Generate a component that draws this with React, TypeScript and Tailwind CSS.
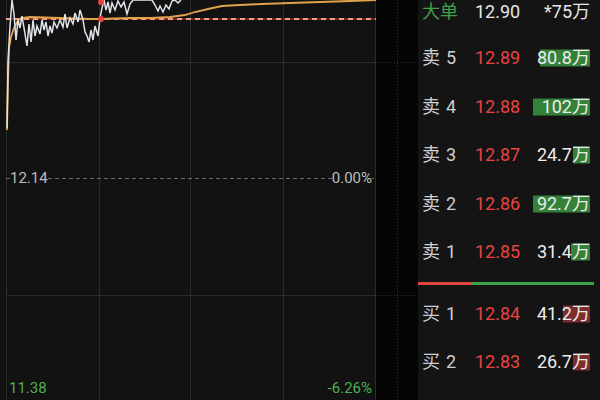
import React from 'react'

const pricePts =
  '7,128 8,62 10,26 12,0 14,14 16,40 18,20 20,28 22,16 25,34 27,46 29,24 31,42 33,20 35,36 37,26 40,34 42,20 44,30 46,22 48,36 50,26 52,33 54,22 57,28 60,20 63,27 65,14 67,28 70,18 73,24 75,13 78,22 80,10 83,20 85,32 87,36 89,42 91,30 93,40 95,26 98,36 100,18 102,8 104,0 106,10 108,2 110,13 112,3 115,10 118,1 121,7 124,2 127,14 130,4 133,0 152,0 155,5 158,11 160,6 163,12 166,5 169,9 172,1 175,0 178,3 181,0'

const avgPts =
  '7,130 8,82 9,48 11,37 14,28 17,22 21,18 30,17 60,18 90,19 100,19 130,18 150,18 170,17 185,15 195,12 208,9 222,6 240,5 262,4 290,3 320,2 350,1 376,0'

type Row = {
  label: string
  price: string
  vol: string
  bar: number
  tone: 'g' | 'r'
}

const asks: Row[] = [
  { label: '卖5', price: '12.89', vol: '80.8万', bar: 50, tone: 'g' },
  { label: '卖4', price: '12.88', vol: '102万', bar: 57, tone: 'g' },
  { label: '卖3', price: '12.87', vol: '24.7万', bar: 17, tone: 'g' },
  { label: '卖2', price: '12.86', vol: '92.7万', bar: 57, tone: 'g' },
  { label: '卖1', price: '12.85', vol: '31.4万', bar: 19, tone: 'g' },
]

const bids: Row[] = [
  { label: '买1', price: '12.84', vol: '41.2万', bar: 27, tone: 'r' },
  { label: '买2', price: '12.83', vol: '26.7万', bar: 17, tone: 'r' },
  { label: '买3', price: '12.82', vol: '38.1万', bar: 33, tone: 'r' },
]

const QuoteRow = ({ row }: { row: Row }) => (
  <div className="flex h-[48.5px] shrink-0 items-center">
    <div className="w-[57px] pl-[4px] text-[#cfcfcf]">
      {row.label[0]}
      <span className="ml-[6px]">{row.label.slice(1)}</span>
    </div>
    <div className="w-[56px] text-[#e8433f]">{row.price}</div>
    <div className="flex flex-1 justify-end pr-[10px]">
      <div className="relative">
        <span
          className={
            row.tone === 'g'
              ? 'absolute right-0 top-1/2 h-[17px] -translate-y-1/2 bg-[#34823a]'
              : 'absolute right-0 top-1/2 h-[17px] -translate-y-1/2 bg-[#7c2c2c]'
          }
          style={{ width: row.bar }}
        />
        <span className="relative text-[#ececec]">{row.vol}</span>
      </div>
    </div>
  </div>
)

const Chart = () => (
  <div className="relative h-full w-[376px] shrink-0 bg-[#121212]">
    <svg className="absolute inset-0" width="376" height="400" viewBox="0 0 376 400">
      <g stroke="#2b2b2b" strokeWidth="1">
        <line x1="6.5" y1="0" x2="6.5" y2="400" />
        <line x1="99.5" y1="0" x2="99.5" y2="400" />
        <line x1="190.5" y1="0" x2="190.5" y2="400" />
        <line x1="283.5" y1="0" x2="283.5" y2="400" />
        <line x1="375.5" y1="0" x2="375.5" y2="400" />
        <line x1="6" y1="62.5" x2="376" y2="62.5" />
        <line x1="6" y1="295.5" x2="376" y2="295.5" />
      </g>
      <line x1="6" y1="178.5" x2="376" y2="178.5" stroke="#6a6a6a" strokeDasharray="4 3" />
      <line x1="6" y1="19" x2="376" y2="19" stroke="#7a2418" strokeWidth="2" />
      <line x1="6" y1="19" x2="376" y2="19" stroke="#e9a28c" strokeWidth="2" strokeDasharray="5 4" />
      <polyline points={avgPts} fill="none" stroke="#e3a24c" strokeWidth="1.8" />
      <polyline points={pricePts} fill="none" stroke="#dfe3ea" strokeWidth="1.5" />
      <circle cx="101" cy="19" r="3" fill="#e8433f" />
      <circle cx="101" cy="2" r="3" fill="#e8433f" />
    </svg>
    <div className="absolute left-[10px] top-[168px] bg-[#121212] text-[15px] leading-[20px] text-[#bdbdbd]">12.14</div>
    <div className="absolute right-[4px] top-[168px] bg-[#121212] text-[15px] leading-[20px] text-[#bdbdbd]">0.00%</div>
    <div className="absolute bottom-[2px] left-[9px] text-[15px] leading-[20px] text-[#4caf50]">11.38</div>
    <div className="absolute bottom-[2px] right-[4px] text-[15px] leading-[20px] text-[#4caf50]">-6.26%</div>
  </div>
)

export default function App() {
  return (
    <div
      className="flex h-[400px] w-[600px] overflow-hidden bg-black text-[18px]"
      style={{ fontFamily: 'Roboto, "Noto Sans CJK SC", sans-serif' }}
    >
      <Chart />

      <div className="relative h-full w-[42px] shrink-0 bg-[#050505]">
        <svg className="absolute inset-0" width="42" height="400" viewBox="0 0 42 400">
          <g stroke="#333" strokeDasharray="1 2">
            <line x1="21.5" y1="0" x2="21.5" y2="400" />
            <line x1="0" y1="62.5" x2="42" y2="62.5" />
            <line x1="0" y1="295.5" x2="42" y2="295.5" />
          </g>
        </svg>
      </div>

      <div className="flex h-full flex-1 flex-col bg-[#141414] leading-[24px]">
        <div className="flex h-[34px] shrink-0 items-start">
          <div className="w-[57px] pl-[4px] text-[#41a04a]">大单</div>
          <div className="w-[56px] text-[#e6e6e6]">12.90</div>
          <div className="flex-1 pr-[10px] text-right text-[#e6e6e6]">*75万</div>
        </div>

        {asks.map((r) => (
          <QuoteRow key={r.label} row={r} />
        ))}

        <div className="flex h-[13px] shrink-0 items-center pr-[6px]">
          <div className="h-[3px] w-[54px] bg-[#e0443e]" />
          <div className="h-[3px] flex-1 bg-[#3fa34a]" />
        </div>

        {bids.map((r) => (
          <QuoteRow key={r.label} row={r} />
        ))}
      </div>
    </div>
  )
}
